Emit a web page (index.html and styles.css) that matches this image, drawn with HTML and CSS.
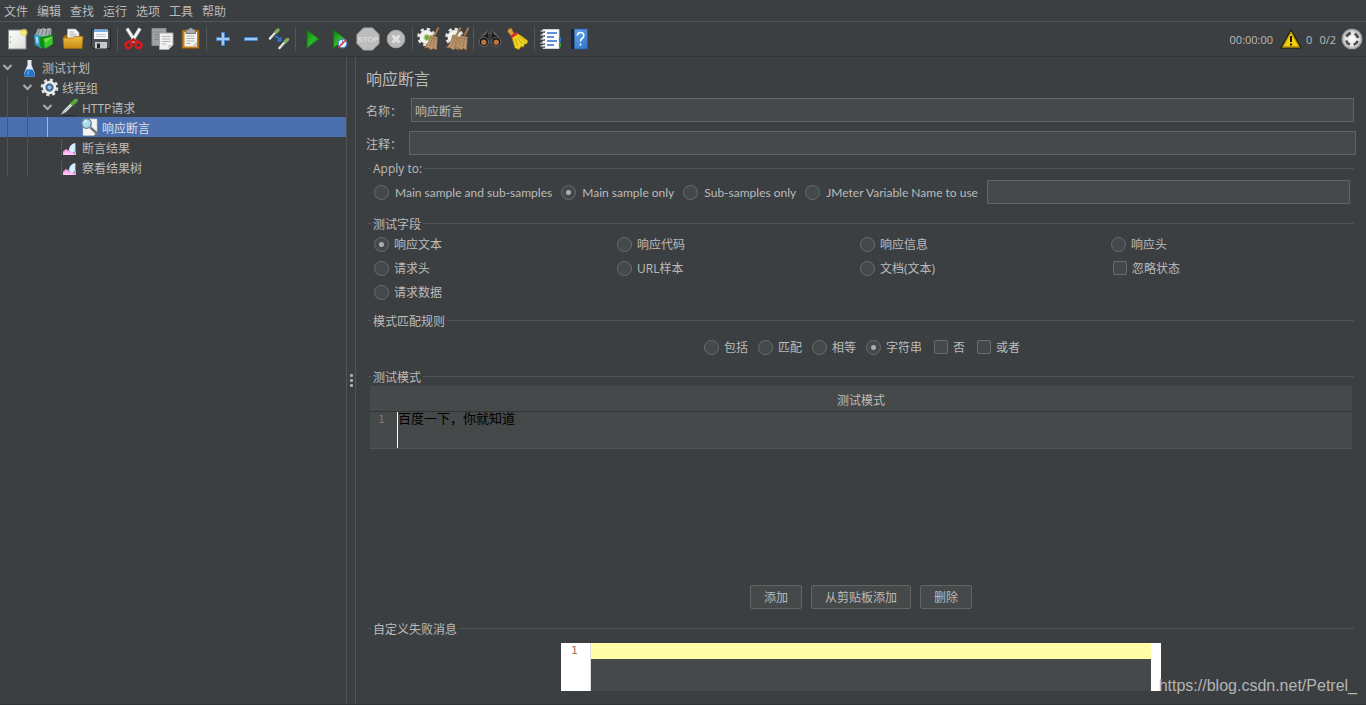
FILE: index.html
```html
<!DOCTYPE html>
<html lang="zh-CN">
<head>
<meta charset="utf-8">
<title>响应断言</title>
<link rel="stylesheet" href="styles.css">
</head>
<body>
<svg class="defs" aria-hidden="true">
  <defs>
    <linearGradient id="gold" x1="0" y1="0" x2="0" y2="1"><stop offset="0" stop-color="#f0bd45"/><stop offset="1" stop-color="#c98a10"/></linearGradient>
    <linearGradient id="green" x1="0" y1="0" x2="1" y2="1"><stop offset="0" stop-color="#0f7a12"/><stop offset=".5" stop-color="#2db82a"/><stop offset="1" stop-color="#0c8a10"/></linearGradient>
    <linearGradient id="paper" x1="0" y1="0" x2="1" y2="1"><stop offset="0" stop-color="#ffffff"/><stop offset="1" stop-color="#dcdcda"/></linearGradient>
    <linearGradient id="book" x1="0" y1="0" x2="1" y2="1"><stop offset="0" stop-color="#6aa8ec"/><stop offset="1" stop-color="#2f74cc"/></linearGradient>
    <radialGradient id="glow"><stop offset="0" stop-color="#fffde0"/><stop offset=".4" stop-color="#f6e14a"/><stop offset="1" stop-color="#f6e14a" stop-opacity="0"/></radialGradient>
    <radialGradient id="lamp"><stop offset="0" stop-color="#ffffff"/><stop offset=".7" stop-color="#dedede"/><stop offset="1" stop-color="#8a8a8a"/></radialGradient>
    <g id="broom">
      <path d="M21.500 0.500 17.500 8.500" stroke="#a9764a" stroke-width="2"/>
      <path d="M13.500 8.500 20.500 10 19.500 23 16.500 21.500 13.500 23 12 21 7.500 20.500C11 17 13 12 13.500 8.500Z" fill="#b9946c" stroke="#8a6644" stroke-width=".6"/>
      <path d="M15.500 11 12.500 19M17.500 11.500 16 20.500M13.500 10.500 20 12" stroke="#8a6644" stroke-width=".6" fill="none"/>
    </g>
    <g id="gear">
      <circle cx="9.500" cy="10" r="7" fill="#f1f1ee"/>
      <circle cx="9.500" cy="10" r="8" fill="none" stroke="#e6e6e2" stroke-width="2.500" stroke-dasharray="3.300 2.980"/>
      <circle cx="10" cy="10.500" r="3" fill="#6fae35" stroke="#c7d9b0"/>
    </g>
    <g id="pipette">
      <path d="M1 11 7 4.500" stroke="#eef1ee" stroke-width="2.500" stroke-linecap="round"/>
      <path d="M2.500 10.500 6 6.500" stroke="#8b9488" stroke-width=".8"/>
      <path d="M7 4.500 9 2.500" stroke="#7dad62" stroke-width="3.500" stroke-linecap="round"/>
    </g>
    <g id="chart">
      <path d="M3.500 3V18M3 17.500H18" stroke="#77797b" stroke-width=".8" stroke-dasharray="1 1"/>
      <path d="M5 18V14.500L8 12 11 13.500 18 9V18Z" fill="#f29be3"/>
      <path d="M5 17 8 13.500 11 16 14 14.500 16 18H5Z" fill="#ffc2f2"/>
      <path d="M11 13C11 9.500 14 6 18 6V13.500C16.500 16 12.500 16 11 13Z" fill="#d2edfb"/>
      <path d="M17.500 6V14L15.500 16" stroke="#5087c8" fill="none"/>
    </g>
  </defs>
</svg>

<nav class="menubar" aria-label="菜单">
  <button type="button">文件</button>
  <button type="button">编辑</button>
  <button type="button">查找</button>
  <button type="button">运行</button>
  <button type="button">选项</button>
  <button type="button">工具</button>
  <button type="button">帮助</button>
</nav>

<div class="toolbar" role="toolbar">
  <button type="button" aria-label="新建"><svg viewBox="0 0 24 24"><rect x="3.500" y="3" width="17.500" height="19" fill="url(#paper)" stroke="#8c8c8a"/><path d="M5.500 9v2M5.500 14v2" stroke="#aaa"/><circle cx="19" cy="5.500" r="4.500" fill="url(#glow)"/></svg></button>
  <button type="button" aria-label="模板"><svg viewBox="0 0 24 24"><path d="M2.500 7 5 1.500 8 2 10.500 1 13 2 16 1 18.500 2 18 10H2.500Z" fill="#aab1b3"/><path d="M6.500 2.500 4.500 8M10 2.500 8.500 8M14 2.500 12.500 8M17 3 16 8" stroke="#6d7679"/><path d="M1 7.500 9 9V21.500L2 18Z" fill="#2f9ad3"/><path d="M2.500 9.500 5 10 5.500 16.500 3.500 16Z" fill="#a7dcf3"/><path d="M6.500 10 13 9 19 7.500 20 10V17L12.500 22 7 19.500Z" fill="#0d8d13"/><path d="M10.500 12 19.500 9.500V17L12 21.500Z" fill="#3fc52d"/><path d="M11 12 19.500 9.500 13 15.500Z" fill="#7bdc4b"/></svg></button>
  <button type="button" aria-label="打开"><svg viewBox="0 0 24 24"><path d="M2.500 9.500 5 7.500H18L20.500 10V20H3Z" fill="#a66f0c"/><path d="M6.500 2H14.500L18 5.500V16H6.500Z" fill="#f8f8f6" stroke="#a5a5a2" stroke-width=".7"/><path d="M8.500 5H13M8.500 7H15.500M8.500 9H15.500" stroke="#9b9b99" stroke-width=".8"/><path d="M2 11H12L14 9.500H22L21 21.500H3Z" fill="url(#gold)" stroke="#a66f0c" stroke-width=".7"/></svg></button>
  <button type="button" aria-label="保存"><svg viewBox="0 0 24 24"><path d="M2.500 2.500H21.500V21.500H4.500L2.500 19.500Z" fill="#4c4f50" stroke="#242627"/><path d="M5 2.500H19V12H5Z" fill="#f6f9fc"/><path d="M5 2.500H19V5H5Z" fill="#77aee2"/><path d="M7 7.500H17M7 9.500H17" stroke="#a9bccb" stroke-width=".8"/><path d="M6 15H18V21.500H6Z" fill="#c7c9ca"/><path d="M8 16.500H11V21H8Z" fill="#25282a"/></svg></button>
  <span class="sep"></span>
  <button type="button" aria-label="剪切"><svg viewBox="0 0 24 24"><path d="M5 1.500 13.500 15M18 1.500 9.500 15" stroke="#8e9393" stroke-width="4"/><path d="M5 1.500 13.500 15M18 1.500 9.500 15" stroke="#f5f7f7" stroke-width="2.500"/><path d="M8.500 15 11.500 12.500 14.500 15" stroke="#c71414" stroke-width="2.500" fill="none"/><g fill="none" stroke="#d51c1c" stroke-width="2.600"><ellipse cx="6.500" cy="18" rx="2.900" ry="3.200" transform="rotate(35 6.500 18)"/><ellipse cx="16.500" cy="18" rx="2.900" ry="3.200" transform="rotate(-35 16.500 18)"/></g></svg></button>
  <button type="button" aria-label="复制"><svg viewBox="0 0 24 24"><path d="M2 1.500H16V18.500H2Z" fill="#a0a3a2" stroke="#8a8d8c"/><path d="M4.500 5H13M4.500 7.500H13M4.500 10H13M4.500 12.500H10" stroke="#868988"/><path d="M9.500 6H23V18L18.500 22.500H9.500Z" fill="#f1f1ef" stroke="#a9a9a5"/><path d="M12 9.500H20.500M12 12H20.500M12 14.500H20.500M12 17H16" stroke="#b7b7b4"/><path d="M18.500 22.500V18H23Z" fill="#c9c9c5"/></svg></button>
  <button type="button" aria-label="粘贴"><svg viewBox="0 0 24 24"><rect x="4" y="3" width="17" height="18.500" rx="1" fill="#bf7d20" stroke="#80500c"/><path d="M6.500 5H19V19.500H6.500Z" fill="#f4f4f1"/><path d="M8 2.500H10.500L11.500 1H14L15 2.500H17.500V6.500H8Z" fill="#a9aca9" stroke="#5e615e" stroke-width=".8"/><path d="M8.500 9H16.500M8.500 11.500H16.500M8.500 14H16.500M8.500 16.500H12.500" stroke="#afafab"/><path d="M14 19.500 19 14.500V19.500Z" fill="#c9c9c5"/></svg></button>
  <span class="sep"></span>
  <button type="button" aria-label="展开"><svg viewBox="0 0 24 24"><path d="M10.500 5.500H13.500V10.500H18.500V13.500H13.500V18.500H10.500V13.500H5.500V10.500H10.500Z" fill="#a4c8f1" stroke="#4585d4"/></svg></button>
  <button type="button" aria-label="折叠"><svg viewBox="0 0 24 24"><path d="M5.500 10.500H18.500V13.500H5.500Z" fill="#a4c8f1" stroke="#4585d4"/></svg></button>
  <button type="button" aria-label="切换"><svg viewBox="0 0 24 24"><use href="#pipette" x="2" y="0.500"/><use href="#pipette" x="11.500" y="10"/><path d="M8.500 9 13 12.500" stroke="#2f76df" stroke-width="1.800"/><path d="M14.500 9.500V14.500H9.500Z" fill="#2f76df"/></svg></button>
  <span class="sep"></span>
  <button type="button" aria-label="启动"><svg viewBox="0 0 24 24"><path d="M7 3 19 12 7 21Z" fill="url(#green)" stroke="#0d7410" stroke-width=".7"/></svg></button>
  <button type="button" aria-label="不停顿启动"><svg viewBox="0 0 24 24"><path d="M5.500 3 17.500 12 5.500 21Z" fill="url(#green)" stroke="#0d7410" stroke-width=".7"/><circle cx="14.500" cy="16.500" r="4.300" fill="#e7f1fa" stroke="#4c8ac3" stroke-width="1.300"/><path d="M14.500 13.500V17H12.500" stroke="#3f79b2" fill="none"/><path d="M10.500 20.500 18.500 12.500" stroke="#e03434" stroke-width="1.400"/></svg></button>
  <button type="button" aria-label="停止"><svg viewBox="0 0 24 24"><path d="M7.500 1H16.500L23 7.500V16.500L16.500 23H7.500L1 16.500V7.500Z" fill="#bcbcbc" stroke="#aaa"/><text x="12" y="15" class="stop-text">STOP</text></svg></button>
  <button type="button" aria-label="关闭"><svg viewBox="0 0 24 24"><circle cx="12" cy="12" r="8.800" fill="#b8b8b8" stroke="#a6a6a6"/><path d="M8.500 8.500 15.500 15.500M15.500 8.500 8.500 15.500" stroke="#e0e0e0" stroke-width="3"/></svg></button>
  <span class="sep"></span>
  <button type="button" aria-label="清除"><svg viewBox="0 0 24 24"><use href="#gear"/><use href="#broom"/></svg></button>
  <button type="button" aria-label="清除全部"><svg viewBox="0 0 24 24"><use href="#gear"/><use href="#broom" x="-6" y="0"/><use href="#broom" x="2" y="0"/></svg></button>
  <span class="sep"></span>
  <button type="button" aria-label="查找"><svg viewBox="0 0 24 24"><path d="M2 13 6 6.500 9.500 4.500 11 7 10.500 16H2ZM22 13 18 6.500 14.500 4.500 13 7 13.500 16H22Z" fill="#1b1b1b" stroke="#6b6b6b" stroke-width=".8"/><path d="M5.500 8.500 8.500 6M18.500 8.500 15.500 6M3.500 11.500H9M20.500 11.500H15" stroke="#9a9a9a" stroke-width=".9"/><rect x="10" y="7.500" width="4" height="5.500" fill="#3a3a3a"/><circle cx="5.800" cy="14.800" r="4.600" fill="#151515" stroke="#777" stroke-width=".8"/><circle cx="18.200" cy="14.800" r="4.600" fill="#151515" stroke="#777" stroke-width=".8"/><circle cx="5.800" cy="15.200" r="2.700" fill="#b97444"/><circle cx="18.200" cy="15.200" r="2.700" fill="#b97444"/></svg></button>
  <button type="button" aria-label="重置查找"><svg viewBox="0 0 24 24"><path d="M2.500 2 5.500 1 7.500 5.500 9 7.500 5.500 9.500 1.500 4.500Z" fill="#d9a045" stroke="#85551a" stroke-width=".7"/><path d="M6 10.500 11.500 6.500 16 9.500 22 14 20.500 17 18.500 17 17.500 20 15 19.500 13 22.500 9 21Z" fill="#f0d323" stroke="#ae8e0b" stroke-width=".7"/><path d="M9 11.500 12 19M11.500 10.500 16 17M13 9.500 19.500 15" stroke="#b5930b" fill="none" stroke-width=".7"/><path d="M5 10 11 6" stroke="#d62c2c" stroke-width="2.800"/></svg></button>
  <span class="sep"></span>
  <button type="button" aria-label="函数助手"><svg viewBox="0 0 24 24"><path d="M4 2.500H20V21.500H4Z" fill="#fff" stroke="#cfd4d8"/><path d="M20 10H22V15H20Z" fill="#2d77d7"/><path d="M20 16H22V20H20Z" fill="#2fa13b"/><path d="M8 6H18M8 10H15M8 14H18M8 18H15" stroke="#2d6fce" stroke-width="1.500"/><path d="M2 5H6M2 9H6M2 13H6M2 17H6M2 20H6" stroke="#3a3d3f" stroke-width="1.300"/><path d="M1.500 4H5M1.500 8H5M1.500 12H5M1.500 16H5M1.500 19H5" stroke="#f2f2f2"/></svg></button>
  <button type="button" aria-label="帮助"><svg viewBox="0 0 24 24"><path d="M4.500 2H20.500V22H4.500Z" fill="url(#book)" stroke="#2a5a9a" stroke-width=".7"/><path d="M4 2H7.500V22H4Z" fill="#15263f"/><path d="M10.500 8.500Q10.500 5.500 13.500 5.500 16.800 5.500 16.800 8.500 16.800 10.300 15 11.500 13.500 12.500 13.500 14.500M13.500 16.500V18.500" fill="none" stroke="#fff" stroke-width="1.600"/></svg></button>

  <div class="status">
    <span>00:00:00</span>
    <svg class="warn" viewBox="0 0 22 20"><path d="M11 1 21 19H1Z" fill="#f6cf0c" stroke="#1d1b05" stroke-width="1.200" stroke-linejoin="round"/><path d="M11 3.500 19 17.700H3Z" fill="none" stroke="#8a6c08" stroke-width=".6"/><path d="M11 7V13M11 14.500V16.500" stroke="#151515" stroke-width="2"/></svg>
    <span>0</span>
    <span class="threads">0/2</span>
    <svg class="lamp" viewBox="0 0 22 22"><circle cx="11" cy="11" r="10.500" fill="url(#lamp)"/><circle cx="11" cy="11" r="6" fill="none" stroke="#4b4b4b" stroke-width="2.600" stroke-dasharray="5.400 4.025" stroke-dashoffset="-2"/></svg>
  </div>
</div>

<main class="workspace">
  <aside class="side">
    <ul class="tree" role="tree">
      <li role="treeitem"><svg class="chevron" viewBox="0 0 15 20"><path d="M3.500 8 7.500 12 11.500 8"/></svg><svg class="node" viewBox="0 0 20 20"><path d="M7.500 3H11.500V8L15 16.500Q15.500 19.500 13.500 19.500H5.500Q3.500 19.500 4 16.500L7.500 8Z" fill="#dfeaf2"/><path d="M6.500 12.500H12.500L15 17Q15 19.500 13.500 19.500H5.500Q4 19.500 4 17Z" fill="#2472cf"/><path d="M7.500 17.500 9 14" stroke="#8cbcf0"/></svg><span class="title">测试计划</span></li>
      <li role="treeitem"><i></i><svg class="chevron" viewBox="0 0 15 20"><path d="M3.500 8 7.500 12 11.500 8"/></svg><svg class="node" viewBox="0 0 20 20"><circle cx="9.500" cy="10.500" r="7.600" fill="none" stroke="#d9dcdd" stroke-width="2.600" stroke-dasharray="3.200 2.770"/><circle cx="9.500" cy="10.500" r="5.500" fill="#577b9f" stroke="#eceeee" stroke-width="2.600"/><circle cx="9.500" cy="10.500" r="2.700" fill="#9dbdde" stroke="#224e87"/></svg><span class="title">线程组</span></li>
      <li role="treeitem"><i></i><i></i><svg class="chevron" viewBox="0 0 15 20"><path d="M3.500 8 7.500 12 11.500 8"/></svg><svg class="node" viewBox="0 0 20 20"><path d="M1 18.500H14" stroke="#292c2e"/><path d="M1 17.500 4 13 11 6 13 8 6 15Z" fill="#e9edf0" stroke="#8a8e8e" stroke-width=".6"/><path d="M4.500 14.500 10.500 8.500" stroke="#8d9396" stroke-width=".8"/><path d="M10 5 14.500 9.500" stroke="#2f6422" stroke-width="1.500"/><path d="M12.500 6.500 16 3.500" stroke="#57a63c" stroke-width="4" stroke-linecap="round"/></svg><span class="title">HTTP请求</span></li>
      <li role="treeitem" class="selected" aria-selected="true"><i></i><i></i><i class="active"></i><span class="chevron"></span><svg class="node" viewBox="0 0 20 20"><path d="M3 2H17V15L14 18.500H3Z" fill="#f5f6f4" stroke="#c5c7c5" stroke-width=".6"/><path d="M10.500 10.500 18 17.500" stroke="#6f7779" stroke-width="2.400"/><circle cx="6.500" cy="6.500" r="4.800" fill="#aadcf2" stroke="#647e8b" stroke-width="1.300"/><path d="M4 6Q4.500 4 7 4" stroke="#fff" fill="none"/></svg><span class="title">响应断言</span></li>
      <li role="treeitem"><i></i><i></i><span class="indent"></span><svg class="node leaf" viewBox="0 0 20 20"><use href="#chart" x="-2"/></svg><span class="title">断言结果</span></li>
      <li role="treeitem"><i></i><i></i><span class="indent"></span><svg class="node leaf" viewBox="0 0 20 20"><use href="#chart" x="-2"/></svg><span class="title">察看结果树</span></li>
    </ul>
  </aside>
  <div class="splitter"><span></span><span></span><span></span></div>

  <form class="panel">
    <h1>响应断言</h1>
    <div class="row name-row"><label for="name">名称：</label><input id="name" type="text" value="响应断言"></div>
    <div class="row comment-row"><label for="comment">注释：</label><input id="comment" type="text"></div>

    <fieldset class="apply">
      <legend>Apply to:</legend>
      <div class="options">
        <label><input type="radio" name="scope">Main sample and sub-samples</label>
        <label><input type="radio" name="scope" checked>Main sample only</label>
        <label><input type="radio" name="scope">Sub-samples only</label>
        <label><input type="radio" name="scope">JMeter Variable Name to use</label>
        <input type="text" aria-label="JMeter Variable Name to use">
      </div>
    </fieldset>

    <fieldset class="fields">
      <legend>测试字段</legend>
      <div class="grid">
        <label><input type="radio" name="field" checked>响应文本</label>
        <label><input type="radio" name="field">响应代码</label>
        <label><input type="radio" name="field">响应信息</label>
        <label><input type="radio" name="field">响应头</label>
        <label><input type="radio" name="field">请求头</label>
        <label><input type="radio" name="field">URL样本</label>
        <label><input type="radio" name="field">文档(文本)</label>
        <label><input type="checkbox">忽略状态</label>
        <label><input type="radio" name="field">请求数据</label>
      </div>
    </fieldset>

    <fieldset class="rules">
      <legend>模式匹配规则</legend>
      <div class="options centered">
        <label><input type="radio" name="rule">包括</label>
        <label><input type="radio" name="rule">匹配</label>
        <label><input type="radio" name="rule">相等</label>
        <label><input type="radio" name="rule" checked>字符串</label>
        <label><input type="checkbox">否</label>
        <label><input type="checkbox">或者</label>
      </div>
    </fieldset>

    <fieldset class="patterns">
      <legend>测试模式</legend>
      <div class="patterns-body">
        <table>
          <thead><tr><th>测试模式</th></tr></thead>
          <tbody><tr><td><div class="cell"><span class="line-no">1</span><textarea aria-label="测试模式" rows="2">百度一下，你就知道</textarea></div></td></tr></tbody>
        </table>
        <div class="actions">
          <button type="button">添加</button>
          <button type="button">从剪贴板添加</button>
          <button type="button">删除</button>
        </div>
      </div>
    </fieldset>

    <fieldset class="message">
      <legend>自定义失败消息</legend>
      <div class="editor"><span class="line-no">1</span><textarea aria-label="自定义失败消息" rows="3"></textarea></div>
    </fieldset>
  </form>
</main>
<div class="watermark">https://blog.csdn.net/Petrel_</div>
</body>
</html>
```

FILE: styles.css
```css
* { box-sizing: border-box; }

body {
  margin: 0;
  min-height: 100vh;
  display: flex;
  flex-direction: column;
  background: #3c3f41;
  color: #bbbbbb;
  font: 12px/16px "Open Sans", "Noto Sans CJK SC", sans-serif;
  border-bottom: 1px solid #323537;
}

button, input, textarea { font: inherit; color: inherit; margin: 0; }
.defs { position: absolute; width: 0; height: 0; }

.menubar {
  display: flex;
  gap: 9px;
  height: 22px;
  padding-left: 4px;
  border-bottom: 1px solid #515456;
}
.menubar button { padding: 2px 0 0; border: 0; background: none; }

.toolbar {
  display: flex;
  align-items: center;
  height: 35px;
  padding: 0 3px;
  border-bottom: 1px solid #323537;
}
.toolbar button {
  display: flex;
  align-items: center;
  justify-content: center;
  width: 28px;
  height: 28px;
  padding: 0;
  border: 0;
  background: none;
}
.toolbar button svg { width: 24px; height: 24px; }
.sep { width: 1px; height: 24px; margin: 0 2px; background: #55585a; }
.stop-text { font: 8px "Liberation Sans", sans-serif; fill: #e6e6e6; text-anchor: middle; }

.status { display: flex; align-items: center; margin-left: auto; font-size: 11px; }
.status span { padding-top: 1px; }
.warn { width: 22px; height: 20px; margin: 0 4px 0 7px; }
.threads { margin: 0 5px 0 7px; }
.lamp { width: 22px; height: 22px; }

.workspace { display: flex; flex: 1; }
.side { width: 347px; flex: none; border-right: 1px solid #515456; }
.tree { margin: 0; padding: 0; list-style: none; }
.tree li { display: flex; align-items: center; height: 20px; }
.tree i { width: 20px; height: 20px; padding-left: 7px; }
.tree i::before { content: ""; display: block; width: 1px; height: 20px; background: #515456; }
.tree .active::before { background: #7fc0ff; }
.tree .selected { background: #4b6eaf; color: #e0e0e0; }
.tree .indent { width: 20px; }
.tree .title { padding-top: 3px; }
.chevron { width: 15px; height: 20px; fill: none; stroke: #adadad; stroke-width: 2; }
.node { width: 20px; height: 20px; margin: 0 2px 0 5px; }
.node.leaf { margin-left: 0; }

.splitter {
  display: flex;
  flex-direction: column;
  align-items: center;
  justify-content: center;
  gap: 2px;
  width: 9px;
  flex: none;
  border-right: 1px solid #515456;
}
.splitter span { width: 3px; height: 3px; border-radius: 1px; background: #adadad; }

.panel {
  display: flex;
  flex: 1;
  flex-direction: column;
  min-width: 0;
  padding: 11px 10px 13px;
}
h1 { margin: 0 0 8px; font-size: 16px; line-height: 22px; font-weight: 400; }

.row { display: flex; align-items: center; }
.row label { width: 43px; padding-top: 3px; }
.row input { flex: 1; min-width: 0; }
.name-row { margin: 0 2px 9px 0; }
.name-row label { width: 45px; }
.comment-row { margin-bottom: 5px; }

input[type="text"] {
  height: 24px;
  padding: 2px 3px 0;
  border: 1px solid #646464;
  background: #45494a;
  outline: 0;
}

fieldset { min-width: 0; margin: 0 2px; padding: 0; border: 0; border-top: 1px solid #515456; }
legend { height: 16px; margin-left: 3px; padding: 0 2px; line-height: 20px; }

fieldset label { display: flex; align-items: center; gap: 5px; padding-top: 2px; white-space: nowrap; }
input[type="radio"], input[type="checkbox"] {
  appearance: none;
  flex: none;
  width: 15px;
  height: 15px;
  margin-bottom: 2px;
  border: 1px solid #6b6b6b;
  border-radius: 50%;
  background: #43494a;
}
input[type="checkbox"] { width: 14px; height: 14px; border-radius: 2px; margin-left: 2px; }
input[type="radio"]:checked { background: radial-gradient(circle, #adadad 2px, #43494a 3px); }

.options { display: flex; align-items: center; gap: 10px; }
.centered { justify-content: center; height: 24px; }
.apply legend { line-height: 18px; }
.apply .options { gap: 9px; padding: 4px 4px 11px 6px; font-family: Lato, sans-serif; }
.apply label { gap: 6px; }
.apply input[type="text"] { flex: 1; min-width: 0; }

.grid {
  display: grid;
  grid-template-columns: 243fr 243fr 251fr 243fr;
  grid-auto-rows: 24px;
  padding: 1px 0 8px 6px;
}
.rules .options { padding: 0 0 0 2px; margin: 7px 0 9px; }

.patterns { display: flex; flex: 1; flex-direction: column; }
.patterns-body { display: flex; flex: 1; flex-direction: column; padding: 2px 2px 11px; }
table { width: 100%; border-collapse: collapse; background: #45494a; }
th { height: 25px; padding: 5px 0 0; font-weight: 400; background: #45494a; border-bottom: 1px solid #323537; }
td { padding: 0; border-bottom: 1px solid #515456; }
.cell { display: flex; height: 36px; }
.line-no { flex: none; font: 11px/16px "DejaVu Sans Mono", monospace; color: #787878; }
.cell .line-no { width: 27px; padding-left: 8px; }
textarea { flex: 1; min-width: 0; padding: 0; border: 0; outline: 0; resize: none; background: none; }
.cell textarea { border-left: 1px solid #ffffff; color: #000000; font: 13px/12px "Noto Sans CJK SC", sans-serif; overflow: hidden; }

.actions { display: flex; justify-content: center; gap: 9px; margin-top: auto; }
.actions button {
  height: 24px;
  padding: 2px 13px 0;
  border: 1px solid #646464;
  border-radius: 2px;
  background: #45494a;
  white-space: nowrap;
}

.message .editor { display: flex; width: 600px; max-width: 100%; height: 48px; margin: 7px auto 0; background: #ffffff; }
.editor .line-no { width: 29px; padding-left: 10px; line-height: 15px; color: #a07050; }
.editor textarea {
  margin-right: 10px;
  border-left: 1px solid #dddddd;
  background: linear-gradient(#ffffaa 16px, #45494a 16px);
}

.watermark {
  position: absolute;
  right: 9px;
  bottom: 9px;
  font: 16px/20px "Liberation Sans", sans-serif;
  color: #b4b5b5;
}
```
